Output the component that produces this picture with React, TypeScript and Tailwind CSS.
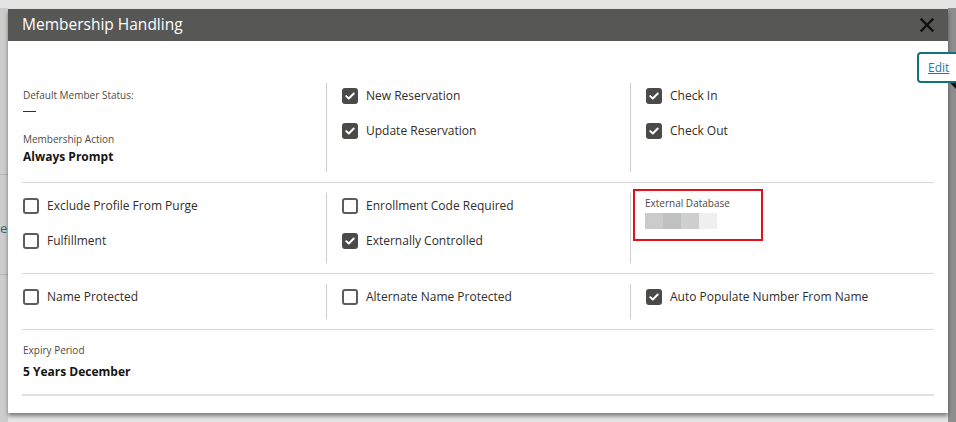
import type { ReactNode } from "react";

function Box({ checked }: { checked: boolean }) {
  if (checked) {
    return (
      <span className="flex h-4 w-4 shrink-0 items-center justify-center rounded-[3px] bg-[#4a4a48]">
        <svg viewBox="0 0 16 16" className="h-3 w-3" fill="none">
          <path d="M3 8.2 6.4 11.4 13 4.6" stroke="#fff" strokeWidth="2.6" strokeLinecap="round" strokeLinejoin="round" />
        </svg>
      </span>
    );
  }
  return <span className="h-4 w-4 shrink-0 rounded-[3px] border-2 border-[#5c5c5a] bg-white" />;
}

function Check({ label, checked = false }: { label: string; checked?: boolean }) {
  return (
    <div className="flex h-6 items-center gap-[8px] text-[12px] text-[#312d2a]">
      <Box checked={checked} />
      <span>{label}</span>
    </div>
  );
}

function Row({ children }: { children: ReactNode }) {
  return <div className="grid grid-cols-3 border-b border-[#d6d6d6]">{children}</div>;
}

function Cell({ children, first = false }: { children: ReactNode; first?: boolean }) {
  return (
    <div className={first ? "my-[10px] pl-px" : "my-[10px] border-l border-[#cfcfcf] pl-[15px]"}>
      <div className="flex flex-col gap-[11px] pt-px pb-[10px]">{children}</div>
    </div>
  );
}

export default function App() {
  return (
    <div className="relative h-[422px] w-[956px] overflow-hidden bg-[#e4e4e4] font-['Open_Sans',sans-serif]">
      {/* page behind the dialog */}
      <div className="absolute left-0 top-[8px] h-[414px] w-[8px] bg-[#cdcdcd]">
        <div className="mt-[166px] h-px bg-[#b5b5b5]" />
        <div className="mt-[47px] text-[13px] leading-none text-[#1d6f86]">e</div>
        <div className="mt-[39px] h-px bg-[#b5b5b5]" />
      </div>
      <div className="absolute right-0 top-[8px] h-[414px] w-[8px] bg-[#8e8e8e]" />

      <div className="absolute left-[8px] top-[9px] flex h-[404px] w-[940px] flex-col bg-white shadow-[0_3px_4px_rgba(0,0,0,0.45)]">
        <div className="flex h-[32px] items-center justify-between bg-[#575755] pl-[14px] pr-[12px]">
          <span className="text-[15.5px] text-white">Membership Handling</span>
          <svg viewBox="0 0 20 20" className="h-[18px] w-[18px]">
            <path d="M3 3 17 17M17 3 3 17" stroke="#111" strokeWidth="2.6" />
          </svg>
        </div>

        <div className="flex flex-col px-[14px] pt-[32px]">
          <Row>
            <div className="my-[10px] flex flex-col pl-px pb-[6px] text-[#312d2a]">
              <span className="mt-[5px] text-[10px] leading-[14px] text-[#4f4a45]">Default Member Status:</span>
              <span className="mt-[9px] h-px w-[13px] bg-[#312d2a]" />
              <span className="mt-[20px] text-[10px] leading-[14px] text-[#4f4a45]">Membership Action</span>
              <span className="mt-[2px] text-[12px] font-bold leading-[18px] text-[#161513]">Always Prompt</span>
            </div>
            <Cell>
              <Check label="New Reservation" checked />
              <Check label="Update Reservation" checked />
            </Cell>
            <Cell>
              <Check label="Check In" checked />
              <Check label="Check Out" checked />
            </Cell>
          </Row>

          <Row>
            <Cell first>
              <Check label="Exclude Profile From Purge" />
              <Check label="Fulfillment" />
            </Cell>
            <Cell>
              <Check label="Enrollment Code Required" />
              <Check label="Externally Controlled" checked />
            </Cell>
            <div className="my-[10px] border-l border-[#cfcfcf] pl-[2px]">
              <div className="-mt-[4px] flex h-[52px] w-[130px] flex-col border-2 border-[#e3111b] pl-[10px] pt-[5px]">
                <span className="text-[10px] leading-[14px] text-[#4f4a45]">External Database</span>
                <div className="mt-[3px] flex">
                  <span className="h-4 w-[18px] bg-[#cbcbcb]" />
                  <span className="h-4 w-[18px] bg-[#bec1c0]" />
                  <span className="h-4 w-[18px] bg-[#cfcfcf]" />
                  <span className="h-4 w-[18px] bg-[#efefef]" />
                </div>
              </div>
            </div>
          </Row>

          <Row>
            <Cell first>
              <Check label="Name Protected" />
            </Cell>
            <Cell>
              <Check label="Alternate Name Protected" />
            </Cell>
            <Cell>
              <Check label="Auto Populate Number From Name" checked />
            </Cell>
          </Row>

          <div className="flex flex-col border-b-2 border-[#e0e0e0] pb-[13px] pl-px pt-[13px]">
            <span className="text-[10px] leading-[14px] text-[#4f4a45]">Expiry Period</span>
            <span className="mt-[6px] text-[12px] font-bold leading-[18px] text-[#161513]">5 Years December</span>
          </div>
        </div>
      </div>

      {/* Edit popover */}
      <div className="absolute left-[917px] top-[52px] flex h-[31px] w-[50px] items-center rounded-[4px] border-2 border-[#156f7c] bg-white pl-[9px]">
        <span className="text-[12px] text-[#1c7aa0] underline">Edit</span>
      </div>
      <div className="absolute left-[950px] top-[83px] h-0 w-0 border-l-[6px] border-t-[6px] border-l-transparent border-t-[#111]" />
    </div>
  );
}
